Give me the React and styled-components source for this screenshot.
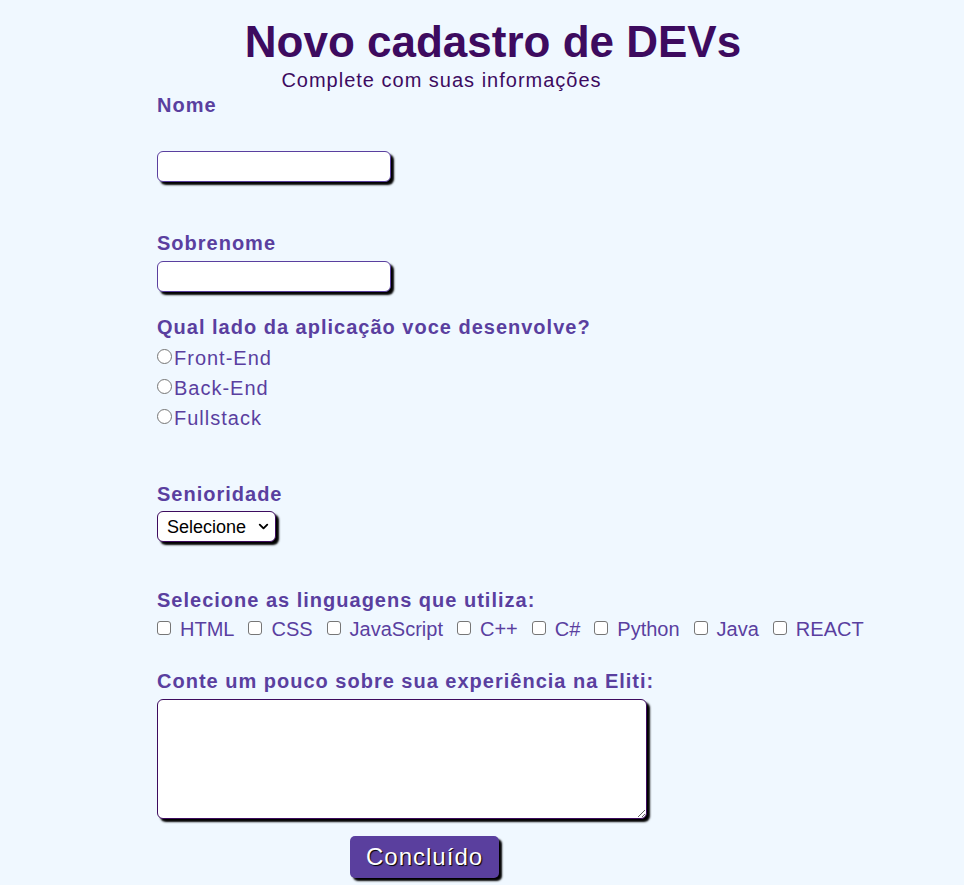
import React from 'react'
import styled, { createGlobalStyle } from 'styled-components'
import { ChevronDown } from 'lucide-react'

const TITLE = '#3d0b5f'
const LABEL = '#5a3f9f'

const GlobalStyle = createGlobalStyle`
  body {
    margin: 0;
    background-color: #f0f8ff;
    font-family: "Liberation Sans", Arial, sans-serif;
    letter-spacing: 1px;
  }
`

const Page = styled.div`
  min-height: 885px;
  padding-top: 17px;
`

const Header = styled.header`
  display: flex;
  flex-direction: column;
  text-align: center;
`

const Title = styled.h1`
  margin: 0;
  padding-left: 22px;
  font-size: 44px;
  line-height: 50px;
  letter-spacing: 0;
  color: ${TITLE};
`

const Subtitle = styled.p`
  margin: 1px 0 0;
  padding-right: 81px;
  font-size: 20px;
  line-height: 24px;
  color: ${TITLE};
`

const Form = styled.form`
  display: flex;
  flex-direction: column;
  align-items: flex-start;
  padding-left: 157px;
`

const Label = styled.label`
  display: block;
  margin-top: ${p => p.$top || 0}px;
  font-size: 20px;
  line-height: 24px;
  font-weight: bold;
  color: ${LABEL};
`

const TextInput = styled.input`
  box-sizing: border-box;
  width: 234px;
  height: 31px;
  margin-top: ${p => p.$top || 0}px;
  border: 1px solid ${LABEL};
  border-radius: 6px;
  background: #fff;
  box-shadow: 3px 3px 2px #000;
  outline: none;
`

const RadioGroup = styled.div`
  display: flex;
  flex-direction: column;
  margin-top: 4px;
`

const RadioRow = styled.label`
  display: flex;
  align-items: center;
  height: 30px;
  font-size: 20px;
  color: ${LABEL};
`

const Radio = styled.input`
  appearance: none;
  box-sizing: border-box;
  width: 15px;
  height: 15px;
  margin: 0 2px 3px 0;
  border: 1.5px solid #767676;
  border-radius: 50%;
  background: #fff;

  &:checked {
    border: 4px solid ${LABEL};
  }
`

const SelectWrap = styled.div`
  position: relative;
  margin-top: 5px;
`

const Select = styled.select`
  display: block;
  box-sizing: border-box;
  width: 119px;
  height: 31px;
  padding: 0 24px 0 9px;
  border: 1px solid ${TITLE};
  border-radius: 6px;
  background: #fff;
  box-shadow: 3px 3px 2px #000;
  appearance: none;
  font-family: "Liberation Sans", Arial, sans-serif;
  font-size: 18px;
  letter-spacing: 0;
  color: #000;
`

const SelectArrow = styled(ChevronDown)`
  position: absolute;
  right: 5px;
  top: 8px;
  pointer-events: none;
  color: #000;
`

const CheckRow = styled.div`
  display: flex;
  align-items: center;
  gap: 14px;
  margin-top: 5px;
  height: 24px;
`

const CheckItem = styled.label`
  display: flex;
  align-items: center;
  gap: 8px;
  font-size: 20px;
  line-height: 24px;
  letter-spacing: 0;
  color: ${LABEL};
`

const Checkbox = styled.input`
  appearance: none;
  box-sizing: border-box;
  width: 14px;
  height: 14px;
  margin: 0 1px 2px 0;
  border: 1.5px solid #767676;
  border-radius: 3px;
  background: #fff;

  &:checked {
    background: ${LABEL};
    border-color: ${LABEL};
  }
`

const TextArea = styled.textarea`
  box-sizing: border-box;
  width: 490px;
  height: 120px;
  margin-top: 6px;
  border: 1px solid ${TITLE};
  border-radius: 6px;
  background: #fff;
  box-shadow: 3px 3px 2px #000;
  outline: none;
`

const Submit = styled.button`
  margin: 17px 0 0 193px;
  padding: 7px 16px;
  border: none;
  border-radius: 5px;
  background: #5a3f9e;
  box-shadow: 3px 3px 2px #000;
  color: #fff;
  font-family: "Liberation Sans", Arial, sans-serif;
  font-size: 24px;
  line-height: 28px;
  letter-spacing: 1px;
  text-shadow: 1px 1px 1px #000;
  cursor: pointer;
`

const SIDES = ['Front-End', 'Back-End', 'Fullstack']
const LANGS = ['HTML', 'CSS', 'JavaScript', 'C++', 'C#', 'Python', 'Java', 'REACT']

const App = () => (
  <Page>
    <GlobalStyle />
    <Header>
      <Title>Novo cadastro de DEVs</Title>
      <Subtitle>Complete com suas informações</Subtitle>
    </Header>
    <Form onSubmit={e => e.preventDefault()}>
      <Label $top={1} htmlFor="nome">Nome</Label>
      <TextInput id="nome" $top={34} />

      <Label $top={49} htmlFor="sobrenome">Sobrenome</Label>
      <TextInput id="sobrenome" $top={6} />

      <Label $top={23}>Qual lado da aplicação voce desenvolve?</Label>
      <RadioGroup>
        {SIDES.map(side => (
          <RadioRow key={side}>
            <Radio type="radio" name="lado" value={side} />
            {side}
          </RadioRow>
        ))}
      </RadioGroup>

      <Label $top={49} htmlFor="senioridade">Senioridade</Label>
      <SelectWrap>
        <Select id="senioridade" defaultValue="">
          <option value="">Selecione</option>
          <option value="junior">Júnior</option>
          <option value="pleno">Pleno</option>
          <option value="senior">Sênior</option>
        </Select>
        <SelectArrow size={15} strokeWidth={3} />
      </SelectWrap>

      <Label $top={46}>Selecione as linguagens que utiliza:</Label>
      <CheckRow>
        {LANGS.map(lang => (
          <CheckItem key={lang}>
            <Checkbox type="checkbox" value={lang} />
            {lang}
          </CheckItem>
        ))}
      </CheckRow>

      <Label $top={28} htmlFor="experiencia">Conte um pouco sobre sua experiência na Eliti:</Label>
      <TextArea id="experiencia" />

      <Submit type="submit">Concluído</Submit>
    </Form>
  </Page>
)

export default App
